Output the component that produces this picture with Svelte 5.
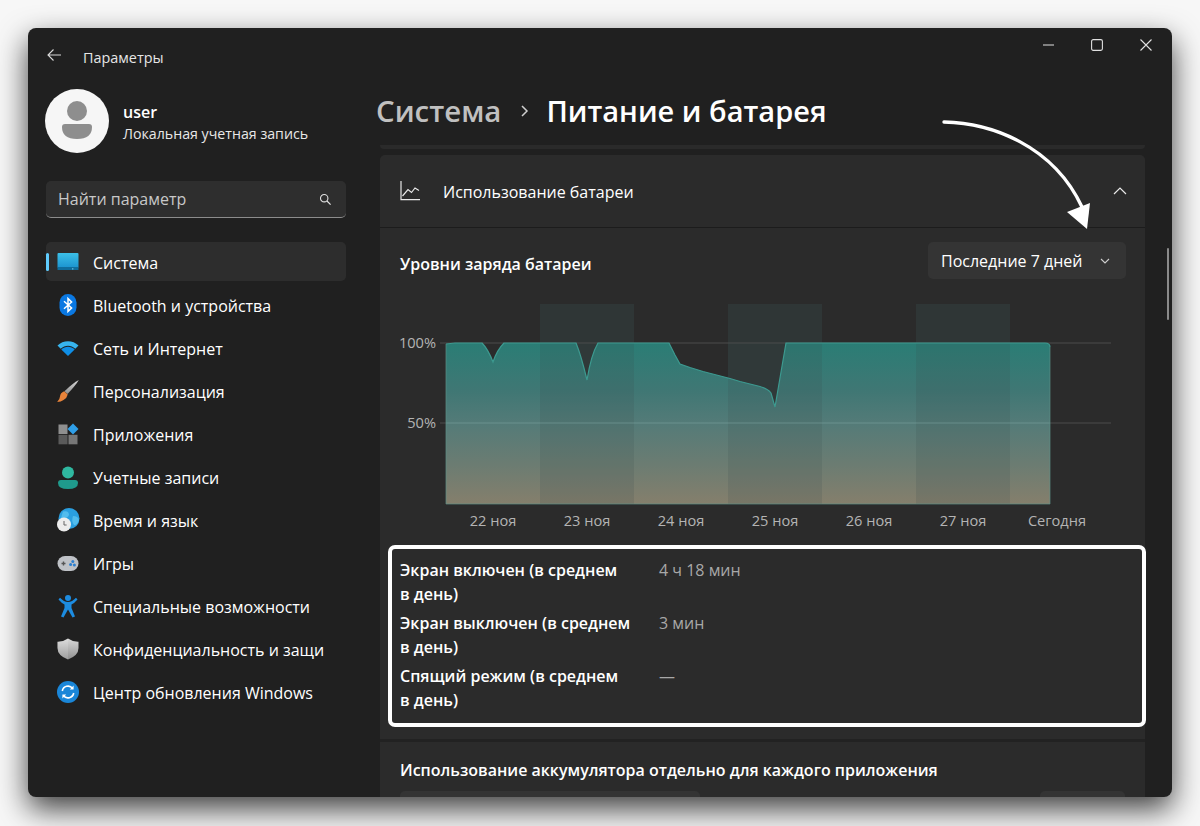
<script>
  const navItems = [
    { icon: "system", label: "Система", active: true },
    { icon: "bluetooth", label: "Bluetooth и устройства" },
    { icon: "wifi", label: "Сеть и Интернет" },
    { icon: "brush", label: "Персонализация" },
    { icon: "apps", label: "Приложения" },
    { icon: "user", label: "Учетные записи" },
    { icon: "time", label: "Время и язык" },
    { icon: "games", label: "Игры" },
    { icon: "access", label: "Специальные возможности" },
    { icon: "shield", label: "Конфиденциальность и защи" },
    { icon: "update", label: "Центр обновления Windows" },
  ];

  const stats = [
    { label: "Экран включен (в среднем", rest: "в день)", value: "4 ч 18 мин" },
    { label: "Экран выключен (в среднем", rest: "в день)", value: "3 мин" },
    { label: "Спящий режим (в среднем", rest: "в день)", value: "—" },
  ];

  const bands = [540, 728, 916];
  const days = [
    { x: 493, text: "22 ноя" },
    { x: 587, text: "23 ноя" },
    { x: 681, text: "24 ноя" },
    { x: 775, text: "25 ноя" },
    { x: 869, text: "26 ноя" },
    { x: 963, text: "27 ноя" },
    { x: 1057, text: "Сегодня" },
  ];

  // battery curve, in page pixels
  const curve =
    "M446 344 L455 343 L482 343 Q488 349 493 362 Q497 350 504 343 L576 343 " +
    "Q581 355 587 380 Q591 355 598 343 L669 343 L675 355 L680 364 L690 367.5 " +
    "L703 371.5 L730 378.5 L740 381.5 L760 386.5 Q768 389 771 393 L775 407 L786 343 " +
    "L1045 343 Q1050 343 1050 347";
  const area = curve + " L1050 504 L446 504 Z";
</script>

{#snippet navIcon(name)}
  <svg class="nav-icon" viewBox="0 0 24 24" width="24" height="24" aria-hidden="true">
    {#if name === "system"}
      <rect x="1.5" y="3" width="21" height="15" rx="1" fill="url(#gMon)" />
      <rect x="1.5" y="17" width="21" height="3" fill="#0f6d9c" />
      <rect x="16" y="18.4" width="1.4" height="1" fill="#7fd0ee" />
    {:else if name === "bluetooth"}
      <rect x="3.5" y="1" width="17" height="22" rx="8.5" fill="#0a78e2" />
      <path d="M8 8.2 L15.6 15 L12 18.4 V5.6 L15.6 9 L8 15.8" fill="none" stroke="#fff" stroke-width="1.5" />
    {:else if name === "wifi"}
      <path d="M1.5 9.5 C7 3.8 17 3.8 22.5 9.5 L19.3 12.8 C15 8.8 9 8.8 4.7 12.8 Z" fill="#37b4ee" />
      <path d="M5.3 13.4 C9 9.8 15 9.8 18.7 13.4 L12 20 Z" fill="#0f8ee6" />
    {:else if name === "brush"}
      <path d="M22.8 1 Q20 6 11.5 15 L8.5 12.2 Q17 4 22.8 1 Z" fill="url(#gShield)" />
      <path d="M8.2 12.2 L11.7 15.4 Q11 19 7.5 21 Q5 22.8 1.2 23 Q3.8 20.5 4 17.5 Q4.3 13.8 8.2 12.2 Z" fill="#e8833a" />
    {:else if name === "apps"}
      <rect x="2.5" y="2.5" width="9" height="9.5" fill="#8f8f8f" />
      <rect x="2.5" y="12.8" width="9" height="9.5" fill="#5a5a5a" />
      <rect x="12.5" y="12.8" width="9" height="9.5" fill="#777" />
      <path d="M17 1.5 L22.5 7 L17 12.5 L11.5 7 Z" fill="#2f9fe8" />
    {:else if name === "user"}
      <circle cx="12" cy="7.5" r="6" fill="#2fb8a0" />
      <path d="M2 18 Q2 15 5 15 H19 Q22 15 22 18 Q22 24 12 24 Q2 24 2 18 Z" fill="#1f9a8c" />
    {:else if name === "time"}
      <circle cx="13" cy="10.5" r="10.5" fill="#2a9fe0" />
      <path d="M7 3.5 Q13 2 13 7 Q11 11 5 10 M17 8 Q22 8 23 12 Q21 18 18 17 Q15 13 17 8 Z" fill="#52bced" />
      <circle cx="8" cy="16.5" r="7" fill="#ececec" />
      <path d="M8 13 V17 H10.6" fill="none" stroke="#666" stroke-width="1" />
    {:else if name === "games"}
      <rect x="1.5" y="5" width="21" height="15" rx="7.5" fill="#bfc2c7" />
      <path d="M5.5 12.5 H9.5 M7.5 10.5 V14.5" stroke="#555" stroke-width="1.4" />
      <circle cx="16.8" cy="10.4" r="1.5" fill="#2c7fd0" />
      <circle cx="14.6" cy="13.4" r="1.5" fill="#2c7fd0" />
      <circle cx="18.4" cy="14" r="1.5" fill="#2c7fd0" />
    {:else if name === "access"}
      <circle cx="12" cy="4" r="3" fill="#1d8ce0" />
      <path d="M2.5 5.5 L4 3.8 Q8 8 12 8 Q16 8 20 3.8 L21.5 5.5 Q18 9.5 15.5 10.5 V14 L19 22.5 L16.5 23.5 L12 15.5 L7.5 23.5 L5 22.5 L8.5 14 V10.5 Q6 9.5 2.5 5.5 Z" fill="#1d8ce0" />
    {:else if name === "shield"}
      <path d="M12 1.5 Q17 5 22.5 4.8 V11 Q22.5 18.5 12 22.5 Q1.5 18.5 1.5 11 V4.8 Q7 5 12 1.5 Z" fill="url(#gShield)" />
      <path d="M12 1.5 V22.5 Q1.5 18.5 1.5 11 V4.8 Q7 5 12 1.5 Z" fill="#fff" opacity=".14" />
    {:else if name === "update"}
      <circle cx="12" cy="12" r="11" fill="#1a86d8" />
      <path d="M6.3 11 A5.8 5.8 0 0 1 16.6 8.4 M17.7 13 A5.8 5.8 0 0 1 7.4 15.6" fill="none" stroke="#fff" stroke-width="1.6" />
      <path d="M17.6 5.6 V9.4 H13.8 Z M6.4 18.4 V14.6 H10.2 Z" fill="#fff" />
    {/if}
  </svg>
{/snippet}

<svg class="defs" width="0" height="0" aria-hidden="true">
  <defs>
    <linearGradient id="gMon" x1="0" y1="0" x2="0" y2="1">
      <stop offset="0" stop-color="#3cc0e8" />
      <stop offset="1" stop-color="#1b93cf" />
    </linearGradient>
    <linearGradient id="gShield" x1="0" y1="0" x2="0" y2="1">
      <stop offset="0" stop-color="#d8d8d8" />
      <stop offset="1" stop-color="#8f8f8f" />
    </linearGradient>
    <linearGradient id="gBattery" x1="0" y1="0" x2="0" y2="1">
      <stop offset="0" stop-color="#2a7d75" />
      <stop offset=".3" stop-color="#407774" />
      <stop offset=".5" stop-color="#547b78" />
      <stop offset=".75" stop-color="#6b7c72" />
      <stop offset="1" stop-color="#857f6c" />
    </linearGradient>
  </defs>
</svg>

<div class="page">
  <div class="window">
    <aside class="sidebar">
      <div class="appbar">
        <svg class="back" viewBox="0 0 16 14" width="16" height="14" aria-hidden="true">
          <path d="M15 7 H2 M7.5 1.5 L2 7 L7.5 12.5" fill="none" stroke="#d8d8d8" stroke-width="1.1" />
        </svg>
        <span>Параметры</span>
      </div>

      <div class="profile">
        <div class="avatar">
          <svg viewBox="0 0 64 64" width="64" height="64" aria-hidden="true">
            <circle cx="32" cy="22" r="10" fill="#8e8e8e" />
            <path d="M17 38 Q17 35 20 35 H44 Q47 35 47 38 Q47 50 32 50 Q17 50 17 38 Z" fill="#8e8e8e" />
          </svg>
        </div>
        <div class="user-text">
          <div class="user-name">user</div>
          <div class="user-sub">Локальная учетная запись</div>
        </div>
      </div>

      <div class="search">
        <span>Найти параметр</span>
        <svg viewBox="0 0 14 14" width="13" height="13" aria-hidden="true">
          <circle cx="5.6" cy="5.6" r="4" fill="none" stroke="#e0e0e0" stroke-width="1.2" />
          <path d="M8.6 8.6 L12.5 12.5" stroke="#e0e0e0" stroke-width="1.3" />
        </svg>
      </div>

      <nav class="nav">
        {#each navItems as item}
          <div class="nav-item" class:active={item.active}>
            {@render navIcon(item.icon)}
            <span class="nav-label">{item.label}</span>
          </div>
        {/each}
      </nav>
    </aside>

    <main class="content">
      <div class="caption">
        <svg viewBox="0 0 12 2" width="11" height="2" aria-hidden="true"><path d="M0 1 H12" stroke="#e0e0e0" stroke-width="1.2" /></svg>
        <svg viewBox="0 0 12 12" width="12" height="12" aria-hidden="true"><rect x=".6" y=".6" width="10.8" height="10.8" rx="1.6" fill="none" stroke="#e0e0e0" stroke-width="1.1" /></svg>
        <svg viewBox="0 0 12 12" width="12" height="12" aria-hidden="true"><path d="M.5 .5 L11.5 11.5 M11.5 .5 L.5 11.5" stroke="#e0e0e0" stroke-width="1.1" /></svg>
      </div>

      <h1 class="crumbs">
        <span class="crumb-parent">Система</span>
        <svg viewBox="0 0 10 14" width="10" height="14" aria-hidden="true"><path d="M2 2 L7 7 L2 12" fill="none" stroke="#cfcfcf" stroke-width="1.5" /></svg>
        <span>Питание и батарея</span>
      </h1>

      <div class="prev-card"></div>

      <section class="card">
        <header class="card-head">
          <svg viewBox="0 0 20 20" width="20" height="20" aria-hidden="true">
            <path d="M1 0 V18.6 H20" fill="none" stroke="#e8e8e8" stroke-width="1.2" />
            <path d="M2.5 15 L8 8.5 L11.5 11.5 L15 7 L19 9.5" fill="none" stroke="#e8e8e8" stroke-width="1.2" />
          </svg>
          <span class="head-title">Использование батареи</span>
          <svg class="head-chevron" viewBox="0 0 14 8" width="14" height="8" aria-hidden="true"><path d="M1 7 L7 1 L13 7" fill="none" stroke="#e8e8e8" stroke-width="1.2" /></svg>
        </header>

        <div class="card-body">
          <div class="levels-row">
            <span class="strong">Уровни заряда батареи</span>
            <div class="select">
              <span>Последние 7 дней</span>
              <svg viewBox="0 0 10 6" width="10" height="6" aria-hidden="true"><path d="M1 1 L5 5 L9 1" fill="none" stroke="#cfcfcf" stroke-width="1.1" /></svg>
            </div>
          </div>

          <svg class="chart" viewBox="400 296 726 240" width="726" height="240">
            {#each bands as x}
              <rect {x} y="304" width="94" height="200" fill="#2f3636" />
            {/each}
            <path d="M440 343 H1111 M440 423 H1111" stroke="#4c4c4c" stroke-width="1.2" />
            <path d={area} fill="url(#gBattery)" />
            {#each bands as x}
              <rect {x} y="343" width="94" height="161" fill="#3a4a4a" opacity=".16" />
            {/each}
            <path d="M446 423 H1050" stroke="#7fa5a0" stroke-width="1" opacity=".55" />
            <path d={curve} fill="none" stroke="#3d9a90" stroke-width="1.2" />
            <path d="M446 344 V504 H1050 V347" fill="none" stroke="#5d8f88" stroke-width="1" opacity=".7" />
            <text x="436" y="348" class="tick" text-anchor="end">100%</text>
            <text x="436" y="428" class="tick" text-anchor="end">50%</text>
            {#each days as d}
              <text x={d.x} y="526" class="tick" text-anchor="middle">{d.text}</text>
            {/each}
          </svg>

          <div class="stats">
            {#each stats as s}
              <div class="stat-label">{s.label}<br />{s.rest}</div>
              <div class="stat-value">{s.value}</div>
            {/each}
          </div>
        </div>

        <div class="apps-block">
          <div class="strong apps-title">Использование аккумулятора отдельно для каждого приложения</div>
          <div class="apps-tools">
            <div class="apps-search"></div>
            <div class="apps-sort"></div>
          </div>
        </div>
      </section>

      <div class="scrollbar"></div>

      <svg class="arrow" viewBox="0 0 160 120" width="160" height="120" aria-hidden="true">
        <path d="M3 3 C50 4 112 26 141 88" fill="none" stroke="#fff" stroke-width="3.4" stroke-linecap="round" />
        <path d="M126 93 L149 84 L146 110 Z" fill="#fff" />
      </svg>
    </main>
  </div>
</div>

<style>
  .defs {
    position: absolute;
  }

  .page {
    box-sizing: border-box;
    height: 826px;
    padding: 28px 0 0 28px;
    background: #f7f7f7;
    overflow: hidden;
  }

  .window {
    display: grid;
    grid-template-columns: 324px 1fr;
    width: 1144px;
    height: 769px;
    background: #202020;
    color: #fff;
    border-radius: 8px;
    overflow: hidden;
    font-family: "Open Sans", "Noto Sans", sans-serif;
    font-size: 16px;
    box-shadow: 0 12px 30px rgba(0, 0, 0, 0.75);
  }

  .sidebar {
    padding: 0 0 0 18px;
  }

  .appbar {
    display: flex;
    align-items: center;
    gap: 21px;
    height: 58px;
    font-size: 14.4px;
    color: #e6e6e6;
  }

  .back {
    margin-top: -4px;
  }

  .profile {
    display: flex;
    align-items: center;
    gap: 14px;
    margin: 3px 0 0 -1px;
  }

  .avatar {
    width: 64px;
    height: 64px;
    border-radius: 50%;
    background: #f6f6f6;
  }

  .user-text {
    margin-top: 4px;
  }

  .user-name {
    font-weight: 600;
    line-height: 22px;
  }

  .user-sub {
    font-size: 14.2px;
    line-height: 22px;
    color: #e8e8e8;
  }

  .search {
    display: flex;
    align-items: center;
    justify-content: space-between;
    box-sizing: border-box;
    width: 300px;
    height: 37px;
    margin-top: 28px;
    padding: 0 14px 0 12px;
    background: #2e2e2e;
    border-bottom: 1.5px solid #8c8c8c;
    border-radius: 5px;
    color: #c8c8c8;
  }

  .nav {
    display: flex;
    flex-direction: column;
    gap: 4px;
    width: 300px;
    margin-top: 24px;
  }

  .nav-item {
    position: relative;
    display: flex;
    align-items: center;
    gap: 13px;
    height: 39px;
    padding-left: 10px;
    border-radius: 5px;
  }

  .nav-item.active {
    background: #2d2d2d;
  }

  .nav-item.active::before {
    content: "";
    position: absolute;
    left: 0;
    top: 11px;
    width: 3px;
    height: 18px;
    border-radius: 2px;
    background: #60cdff;
  }

  .nav-icon {
    flex: none;
  }

  .nav-label {
    margin-top: 3px;
    white-space: nowrap;
  }

  .content {
    position: relative;
    padding: 0 27px 0 28px;
    min-width: 0;
  }

  .caption {
    position: absolute;
    top: 11px;
    right: 20px;
    display: flex;
    align-items: center;
    gap: 37px;
  }

  .crumbs {
    display: flex;
    align-items: center;
    gap: 16px;
    box-sizing: border-box;
    height: 117px;
    margin: 0;
    padding-top: 49px;
    font-size: 29px;
    font-weight: 600;
    line-height: 40px;
  }

  .crumb-parent {
    margin: 0 3px 0 -4px;
    color: #c0c0c0;
    font-size: 29.4px;
  }

  .prev-card {
    height: 4px;
    background: #2a2a2a;
    border-radius: 0 0 5px 5px;
  }

  .card {
    margin-top: 6px;
    background: #2b2b2b;
    border-radius: 5px 5px 0 0;
  }

  .card-head {
    display: flex;
    align-items: center;
    gap: 23px;
    height: 72px;
    padding: 0 18px 0 20px;
    border-bottom: 1px solid #1c1c1c;
  }

  .head-title {
    flex: 1;
    margin-top: 1px;
  }

  .card-body {
    padding: 14px 19px 0 20px;
  }

  .levels-row {
    display: flex;
    align-items: center;
    justify-content: space-between;
  }

  .strong {
    font-weight: 600;
  }

  .levels-row .strong {
    margin-top: 6px;
  }

  .select {
    display: flex;
    align-items: center;
    justify-content: space-between;
    box-sizing: border-box;
    width: 198px;
    height: 37px;
    padding: 0 16px 0 13px;
    background: #343434;
    border-radius: 5px;
  }

  .chart {
    display: block;
    margin-top: 17px;
  }

  .tick {
    font-size: 14.6px;
    fill: #b4b4b4;
  }

  .stats {
    display: grid;
    grid-template-columns: 240px 1fr;
    column-gap: 19px;
    row-gap: 5px;
    margin: 9px -20px 0 -12px;
    padding: 9px 8px 11px 8px;
    border: 4px solid #fff;
    border-radius: 7px;
    line-height: 24px;
  }

  .stat-label {
    font-weight: 600;
    white-space: nowrap;
  }

  .stat-value {
    color: #a8a8a8;
  }

  .apps-block {
    margin-top: 12px;
    padding: 17px 20px 0;
    border-top: 3px solid #222;
  }

  .apps-tools {
    display: flex;
    justify-content: space-between;
    margin-top: 10px;
  }

  .apps-search {
    width: 300px;
    height: 37px;
    background: #343434;
    border-radius: 5px;
  }

  .apps-sort {
    width: 85px;
    height: 37px;
    background: #343434;
    border-radius: 5px;
  }

  .scrollbar {
    position: absolute;
    right: 3px;
    top: 220px;
    width: 2px;
    height: 72px;
    border-radius: 1px;
    background: #8a8a8a;
  }

  .arrow {
    position: absolute;
    left: 589px;
    top: 91px;
    overflow: visible;
  }
</style>
